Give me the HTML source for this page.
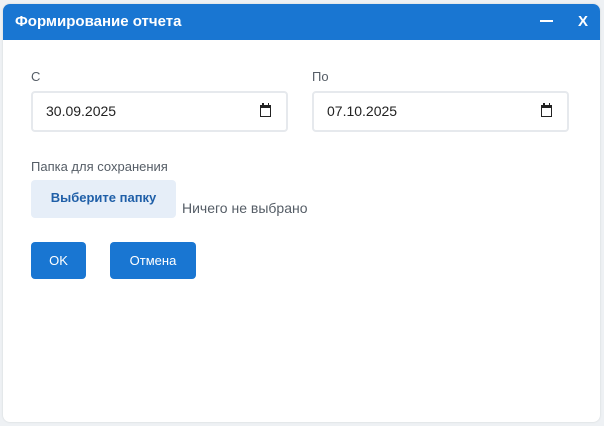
<!DOCTYPE html>
<html><head><meta charset="utf-8"><style>
*{box-sizing:border-box;margin:0;padding:0}
html,body{width:604px;height:426px;background:#eef1f4;overflow:hidden;font-family:"Liberation Sans",Arial,sans-serif}
.dlg{position:absolute;left:3px;top:4px;width:597px;height:418px;background:#fff;border-radius:7px;overflow:hidden;box-shadow:0 0 2px rgba(0,0,0,.12)}
.hdr{height:36px;background:#1976d2;color:#fff;font-weight:bold;font-size:15px;line-height:36px;padding-left:12px;position:relative}
.hdr .min{position:absolute;left:537px;top:16px;width:13px;height:2px;background:#fff}
.hdr .x{position:absolute;left:575px;top:0;font-size:15px}
.lbl{position:absolute;font-size:13px;color:#555d66}
.inp{position:absolute;height:41px;border:2px solid #e6e9ed;border-radius:4px;font-size:14px;color:#222;line-height:37px;padding-left:13px}
.cal{position:absolute;right:15px;top:12px;width:11px;height:12px;border:1.5px solid #222;border-top-width:3px}
.cal:before,.cal:after{content:"";position:absolute;top:-5px;width:1.5px;height:3px;background:#222}
.cal:before{left:1px}.cal:after{right:1px}
.fbtn{position:absolute;left:28px;top:176px;width:145px;height:38px;background:#e6eef8;border-radius:4px;color:#1f5fa8;font-size:13px;font-weight:bold;text-align:center;line-height:36px}
.btn{position:absolute;top:238px;height:37px;background:#1976d2;color:#fff;border-radius:4px;font-size:13px;text-align:center;line-height:37px}
</style></head><body>
<div class="dlg">
<div class="hdr">Формирование отчета<div class="min"></div><div class="x">X</div></div>
<div class="lbl" style="left:28px;top:65px">С</div>
<div class="lbl" style="left:309px;top:65px">По</div>
<div class="inp" style="left:28px;top:87px;width:257px">30.09.2025<div class="cal"></div></div>
<div class="inp" style="left:309px;top:87px;width:257px">07.10.2025<div class="cal"></div></div>
<div class="lbl" style="left:28px;top:155px">Папка для сохранения</div>
<div class="fbtn">Выберите папку</div>
<div class="lbl" style="left:179px;top:196px;font-size:14px">Ничего не выбрано</div>
<div class="btn" style="left:28px;width:55px">OK</div>
<div class="btn" style="left:107px;width:86px">Отмена</div>
</div>
</body></html>
